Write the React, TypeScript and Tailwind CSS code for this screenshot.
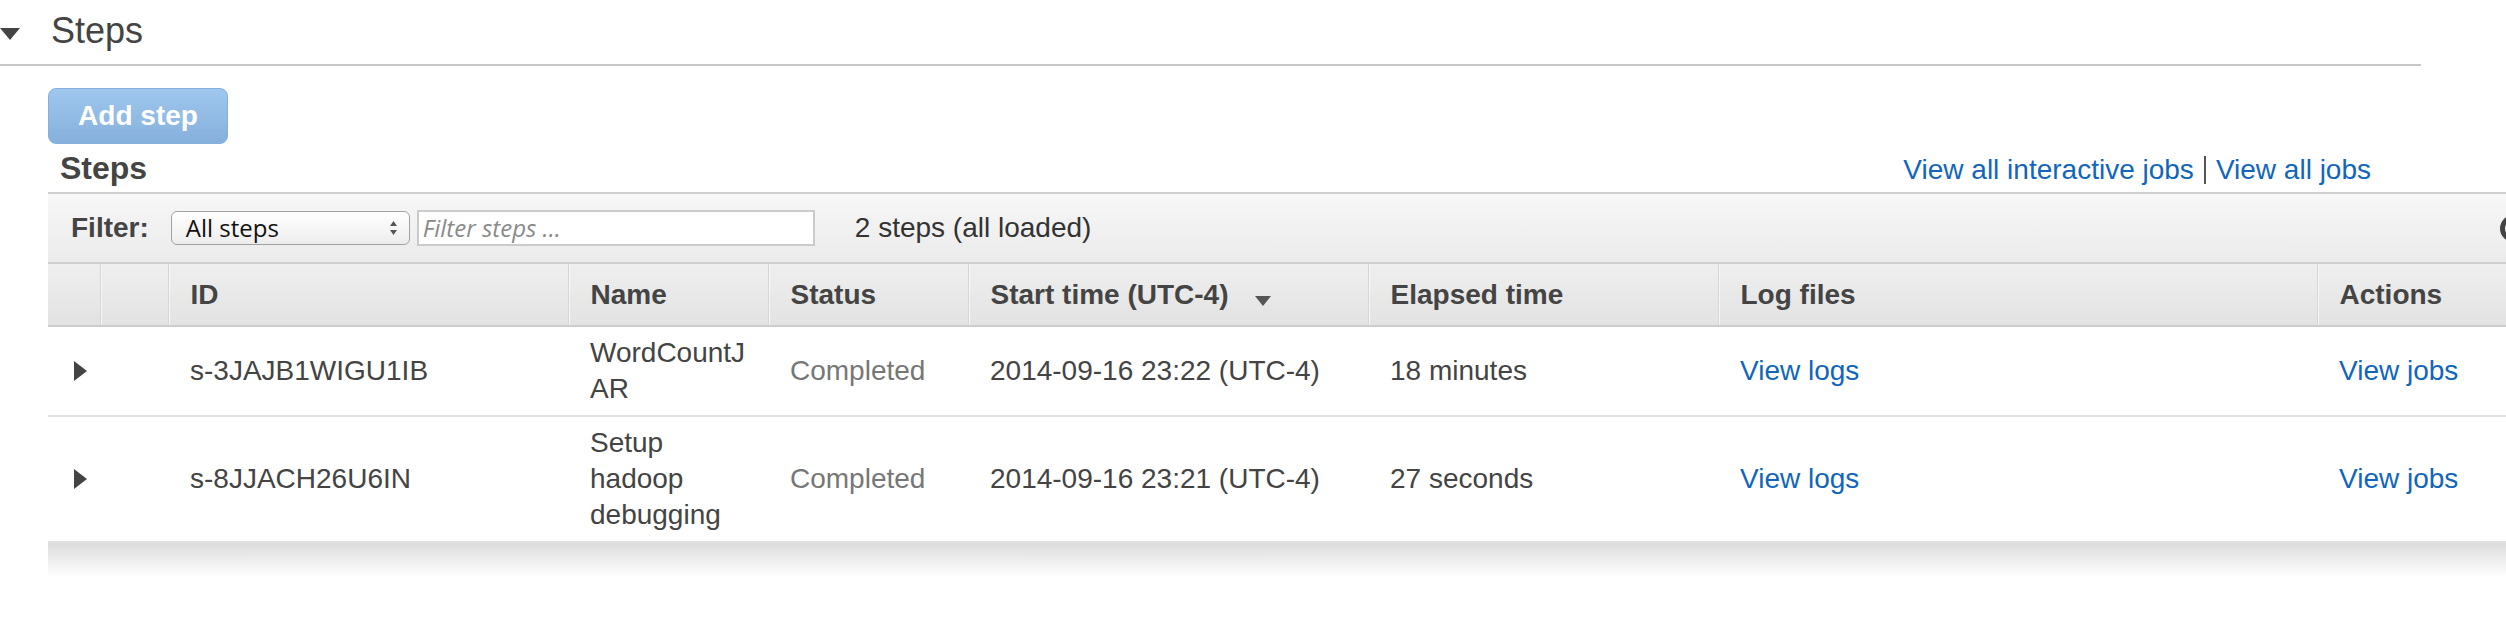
import React from 'react';

interface Step {
    id: string;
    name: string;
    status: string;
    start: string;
    elapsed: string;
}

const steps: Step[] = [
    { id: 's-3JAJB1WIGU1IB', name: 'WordCountJAR', status: 'Completed', start: '2014-09-16 23:22 (UTC-4)', elapsed: '18 minutes' },
    { id: 's-8JJACH26U6IN', name: 'Setup hadoop debugging', status: 'Completed', start: '2014-09-16 23:21 (UTC-4)', elapsed: '27 seconds' },
];

const thBase = 'h-[62px] p-0 pl-[22px] text-left font-bold border-b-2 border-[#cccccc] border-l border-l-[#d6d6d6] shadow-[inset_1px_0_0_#f6f6f6] bg-linear-to-b from-[#efefef] to-[#e2e2e2]';
const tdBase = 'py-[8px] pl-[22px] leading-[36px] align-middle border-b-2 border-[#e2e2e2]';

export default function App() {
    return (
        <div className="w-[2506px] h-[640px] overflow-hidden bg-white text-[#444444] font-['Liberation_Sans',Arial,sans-serif]">
            {/* Section header */}
            <div className="w-[2421px] h-[66px] flex items-start border-b-2 border-[#c6c6c6]">
                <svg width="20" height="12" viewBox="0 0 20 12" className="mt-[28px] shrink-0">
                    <path d="M0 0H20L10 12Z" fill="#444444" />
                </svg>
                <span className="ml-[31px] pt-[13px] text-[36px] leading-[36px] text-[#444444]">Steps</span>
            </div>

            <div className="ml-[48px]">
                <button className="mt-[22px] w-[180px] h-[56px] rounded-[8px] border border-[#86b0dc] bg-linear-to-b from-[#9fc7ee] to-[#86b0dc] text-white font-bold text-[28px] leading-none">
                    Add step
                </button>

                {/* Title + links */}
                <div className="w-[2323px] h-[48px] pt-[6px] flex items-baseline justify-between">
                    <span className="ml-[12px] text-[32px] leading-[36px] font-bold text-[#444444]">Steps</span>
                    <div className="flex items-baseline text-[28px] leading-[36px] text-[#1166bb]">
                        <a>View all interactive jobs</a>
                        <span className="mx-[10px] inline-block w-[2px] h-[28px] bg-[#555555] self-center" />
                        <a>View all jobs</a>
                    </div>
                </div>

                {/* Filter bar */}
                <div className="w-[2480px] h-[72px] flex items-center pl-[23px] border-y-2 border-[#cfcfcf] bg-linear-to-b from-[#f7f7f7] to-[#ebebeb]">
                    <span className="text-[28px] font-bold text-[#444444]">Filter:</span>
                    <div className="ml-[22px] w-[239px] h-[34px] rounded-[6px] border border-[#a2a2a2] bg-linear-to-b from-white to-[#ededed] flex items-center justify-between pl-[14px] pr-[11px] font-['Open_Sans',sans-serif] text-[24px] text-[#111111]">
                        <span>All steps</span>
                        <svg width="9" height="16" viewBox="0 0 9 16">
                            <path d="M4.5 1L8 6H1Z M4.5 15L8 10H1Z" fill="#555555" />
                        </svg>
                    </div>
                    <input
                        className="ml-[7px] w-[398px] h-[36px] border-2 border-[#cbcbcb] bg-white pl-[4px] font-['Open_Sans',sans-serif] text-[24px] outline-none placeholder:italic placeholder:text-[#8a8a8a]"
                        placeholder="Filter steps ..."
                    />
                    <span className="ml-[40px] text-[28px] text-[#333333]">2 steps (all loaded)</span>
                    <svg width="29" height="29" viewBox="0 0 29 29" className="ml-auto mr-0">
                        <circle cx="14.5" cy="14.5" r="11" fill="none" stroke="#444444" strokeWidth="5" />
                    </svg>
                </div>

                {/* Steps table */}
                <table className="table-fixed border-collapse w-[2480px] text-[28px]">
                    <colgroup>
                        <col className="w-[52px]" />
                        <col className="w-[68px]" />
                        <col className="w-[400px]" />
                        <col className="w-[200px]" />
                        <col className="w-[200px]" />
                        <col className="w-[400px]" />
                        <col className="w-[350px]" />
                        <col className="w-[599px]" />
                        <col className="w-[211px]" />
                    </colgroup>
                    <thead>
                        <tr>
                            <th className="h-[62px] p-0 border-b-2 border-[#cccccc] bg-linear-to-b from-[#efefef] to-[#e2e2e2]"></th>
                            <th className={thBase}></th>
                            <th className={thBase}>ID</th>
                            <th className={thBase}>Name</th>
                            <th className={thBase}>Status</th>
                            <th className={thBase}>
                                <span className="inline-flex items-center">
                                    Start time (UTC-4)
                                    <svg width="16" height="10" viewBox="0 0 16 10" className="ml-[26px] mt-[12px]">
                                        <path d="M0 0H16L8 10Z" fill="#555555" />
                                    </svg>
                                </span>
                            </th>
                            <th className={thBase}>Elapsed time</th>
                            <th className={thBase}>Log files</th>
                            <th className={thBase}>Actions</th>
                        </tr>
                    </thead>
                    <tbody>
                        {steps.map((step) => (
                            <tr key={step.id}>
                                <td className="py-[8px] align-middle border-b-2 border-[#e2e2e2]">
                                    <svg width="13" height="20" viewBox="0 0 13 20" className="ml-[26px]">
                                        <path d="M0 0L13 10L0 20Z" fill="#444444" />
                                    </svg>
                                </td>
                                <td className="border-b-2 border-[#e2e2e2]"></td>
                                <td className={tdBase}>{step.id}</td>
                                <td className={`${tdBase} pr-[12px] [overflow-wrap:anywhere]`}>{step.name}</td>
                                <td className={`${tdBase} text-[#777777]`}>{step.status}</td>
                                <td className={tdBase}>{step.start}</td>
                                <td className={tdBase}>{step.elapsed}</td>
                                <td className={`${tdBase} text-[#1166bb]`}>View logs</td>
                                <td className={`${tdBase} text-[#1166bb]`}>View jobs</td>
                            </tr>
                        ))}
                    </tbody>
                </table>
                <div className="w-[2480px] h-[34px] bg-linear-to-b from-[#dcdcdc] to-white" />
            </div>
        </div>
    );
}
